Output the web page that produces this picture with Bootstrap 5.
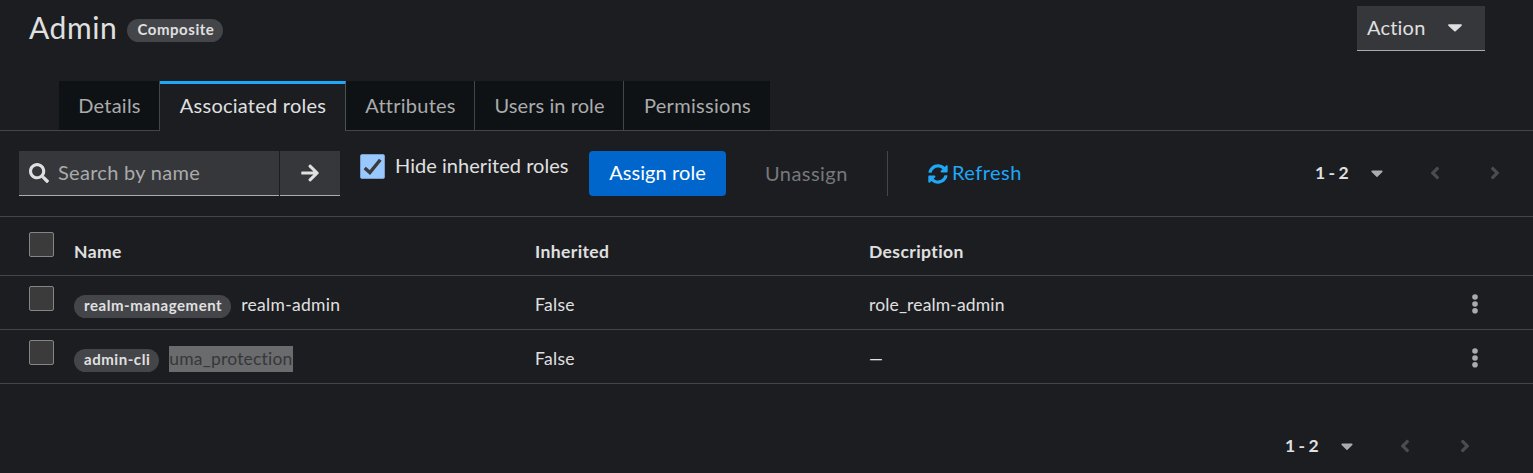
<!DOCTYPE html>
<html lang="en" data-bs-theme="dark">
<head>
<meta charset="utf-8">
<title>Admin role</title>
<link rel="stylesheet" href="https://cdn.jsdelivr.net/npm/bootstrap@5.3.0/dist/css/bootstrap.min.css">
<style>
:root{--line:#444548;--panel:#36373a;--fg:#e0e0e0;--muted:#aaabac;--blue:#1fa7f8}
body{background:#1b1d21;color:var(--fg);font:400 20px/30px Lato,"Red Hat Text",sans-serif;letter-spacing:.24px;overflow:hidden}
svg{fill:currentColor;flex:none;display:block}
.page-head{height:81px;padding:6px 48px 0 29px}
.page-title{font-size:30px;line-height:42px;letter-spacing:.6px;font-weight:400;color:var(--fg)}
.pill{display:inline-block;background:var(--line);border-radius:12px;height:23px;padding:0 9px 0 10px;font-size:15px;line-height:20px;font-weight:700;letter-spacing:.55px;white-space:nowrap}
.field{background:var(--panel);border:0;border-bottom:1px solid var(--muted);border-radius:0;height:45px;color:var(--fg)}
.action-btn{width:128px;padding:0 23px 2px 10px;letter-spacing:.2px}
.role-tabs{padding-left:59px;border-bottom:1px solid var(--line);height:50px;--bs-nav-tabs-border-width:0}
.role-tabs .nav-link{background:#0f1214;color:var(--muted);border:0;border-radius:0;border-right:1px solid var(--line);height:49px;padding:0 0 0 1px;text-align:center;line-height:48px;margin:0}
.role-tabs .nav-link.active{background:#1b1d21;color:var(--fg);height:50px;border-top:3px solid var(--blue);line-height:42px}
.role-tabs .last{border-right:0}
.toolbar{height:86px;border-bottom:1px solid var(--line);padding:20px 0 0 19px}
.search-box{width:260px;padding:0 10px}
.search-box input{background:none;border:0;outline:0;padding:0 0 2px;width:200px;color:var(--fg);letter-spacing:.29px}
.search-box input::placeholder{color:var(--muted);opacity:1}
.go-btn{width:60px;margin-left:1px}
.tick{width:25px;height:25px;margin:0;border:1px solid #858585;border-radius:2px!important;background-color:#3b3b3b;float:none;display:block}
.tick:checked{background-color:#99c8ff;border-color:#7b9fc9;background-size:100%;background-image:url("data:image/svg+xml,%3Csvg xmlns='http://www.w3.org/2000/svg' viewBox='0 0 23 23'%3E%3Cpath d='M3.7 13 8.9 17.6 19.3 4.7' fill='none' stroke='%233b3b3b' stroke-width='3.4'/%3E%3C/svg%3E")}
.assign{background:#06c;color:#fff;width:137px;height:45px;border:0;border-radius:4px;padding:0 0 3px;letter-spacing:.08px;font-size:20px}
.unassign{color:#77787b;letter-spacing:.45px;padding:0 0 2px 1px}
.divider{width:1px;height:45px;background:var(--line)}
.refresh{color:var(--blue);letter-spacing:.45px}
.pager{font-size:17.5px;font-weight:700;letter-spacing:-.4px;height:43px}
.pager svg{color:var(--muted)}
.pager .arrow{color:#4b4c50}
.role-table{width:100%;font-size:17.5px;line-height:26px;letter-spacing:.3px;table-layout:fixed;border-collapse:separate;border-spacing:0}
.role-table th,.role-table td{padding:0;border-bottom:1px solid var(--line);vertical-align:top}
.role-table th{height:59px;padding-top:22px;font-weight:700;letter-spacing:.4px}
.role-table td{height:54px;padding-top:16px}
.role-table th.pick{padding:15px 0 0 29px}
.role-table td.pick{padding:10px 0 0 29px}
.role-table svg{color:var(--muted)}
.picked{background:#6a6b6d;color:#36373a;height:26px;letter-spacing:.2px}
</style>
</head>
<body>
<header class="page-head d-flex justify-content-between">
  <div class="d-flex">
    <h1 class="page-title mb-0">Admin</h1>
    <span class="pill" style="margin:13px 0 0 10px">Composite</span>
  </div>
  <button class="field action-btn d-flex align-items-center justify-content-between" type="button">Action
    <svg width="14" height="22" viewBox="10 0 300 512" preserveAspectRatio="none"><path d="M31.3 192h257.3c17.8 0 26.7 21.5 14.1 34.1L174.1 354.8c-7.8 7.8-20.5 7.8-28.3 0L17.2 226.1C4.6 213.5 13.5 192 31.3 192z"/></svg>
  </button>
</header>

<ul class="nav nav-tabs role-tabs flex-nowrap">
  <li class="nav-item"><a class="nav-link" style="width:101px">Details</a></li>
  <li class="nav-item"><a class="nav-link active" style="width:186px">Associated roles</a></li>
  <li class="nav-item"><a class="nav-link" style="width:129px">Attributes</a></li>
  <li class="nav-item"><a class="nav-link" style="width:149px;letter-spacing:.08px">Users in role</a></li>
  <li class="nav-item"><a class="nav-link last" style="width:146px;letter-spacing:.3px">Permissions</a></li>
</ul>

<section class="toolbar d-flex align-items-start">
  <div class="field search-box d-flex align-items-center">
    <svg width="20" height="20" viewBox="0 0 512 512"><path d="M505 442.7L405.3 343c-4.5-4.5-10.6-7-17-7H372c27.6-35.3 44-79.7 44-128C416 93.1 322.9 0 208 0S0 93.1 0 208s93.1 208 208 208c48.3 0 92.7-16.4 128-44v16.3c0 6.4 2.5 12.5 7 17l99.7 99.7c9.4 9.4 24.6 9.4 33.9 0l28.3-28.3c9.4-9.4 9.4-24.6.1-34zM208 336c-70.7 0-128-57.2-128-128 0-70.7 57.2-128 128-128 70.7 0 128 57.2 128 128 0 70.7-57.2 128-128 128z"/></svg>
    <input type="text" placeholder="Search by name" style="margin-left:9px">
  </div>
  <button class="field go-btn d-flex align-items-center justify-content-center p-0" type="button">
    <svg width="18" height="20" viewBox="0 0 448 512"><path d="M190.5 66.9l22.2-22.2c9.4-9.4 24.6-9.4 33.9 0L441 239c9.4 9.4 9.4 24.6 0 33.9L246.6 467.3c-9.4 9.4-24.6 9.4-33.9 0l-22.2-22.2c-9.5-9.5-9.3-25 .4-34.3L311.4 296H24c-13.3 0-24-10.7-24-24v-32c0-13.3 10.7-24 24-24h287.4L190.9 101.2c-9.8-9.3-10-24.8-.4-34.3z"/></svg>
  </button>
  <label class="d-flex" style="margin-left:20px;width:229px;letter-spacing:.04px"><input class="form-check-input tick" style="margin-top:3px" type="checkbox" checked><span style="margin:-1px 0 0 10px">Hide inherited roles</span></label>
  <button class="btn assign" type="button">Assign role</button>
  <div class="d-flex align-items-center" style="height:45px;margin-left:38px">
    <span class="unassign" style="width:123px">Unassign</span>
    <span class="divider"></span>
    <span class="refresh d-flex align-items-center" style="margin-left:40px"><svg width="20" height="20" viewBox="0 0 512 512"><path d="M370.72 133.28C339.458 104.008 298.888 87.962 255.848 88c-77.458.068-144.328 53.178-162.791 126.85-1.344 5.363-6.122 9.15-11.651 9.15H24.103c-7.498 0-13.194-6.807-11.807-14.176C33.933 94.924 134.813 8 256 8c66.448 0 126.791 26.136 171.315 68.685L463.03 40.97C478.149 25.851 504 36.559 504 57.941V192c0 13.255-10.745 24-24 24H345.941c-21.382 0-32.09-25.851-16.971-40.971l41.75-41.749zM32 296h134.059c21.382 0 32.09 25.851 16.971 40.971l-41.75 41.75c31.262 29.273 71.835 45.319 114.876 45.28 77.418-.07 144.315-53.144 162.787-126.849 1.344-5.363 6.122-9.15 11.651-9.15h57.304c7.498 0 13.194 6.807 11.807 14.176C478.067 417.076 377.187 504 256 504c-66.448 0-126.791-26.136-171.315-68.685L48.97 471.03C33.851 486.149 8 475.441 8 454.059V320c0-13.255 10.745-24 24-24z"/></svg><span style="margin:0 0 3px 4px">Refresh</span></span>
  </div>
  <div class="pager d-flex align-items-center ms-auto" style="margin-right:33px">
    <span style="width:56px">1 - 2</span>
    <svg width="12" height="20" viewBox="0 0 320 512"><path d="M31.3 192h257.3c17.8 0 26.7 21.5 14.1 34.1L174.1 354.8c-7.8 7.8-20.5 7.8-28.3 0L17.2 226.1C4.6 213.5 13.5 192 31.3 192z"/></svg>
    <svg class="arrow" style="margin-left:47px" width="10" height="20" viewBox="0 0 256 512"><path d="M31.7 239l136-136c9.4-9.4 24.6-9.4 33.9 0l22.6 22.6c9.4 9.4 9.4 24.6 0 33.9L127.9 256l96.4 96.4c9.4 9.4 9.4 24.6 0 33.9L201.7 409c-9.4 9.4-24.6 9.4-33.9 0l-136-136c-9.5-9.4-9.5-24.6-.1-34z"/></svg>
    <svg class="arrow" style="margin-left:50px" width="10" height="20" viewBox="0 0 256 512"><path d="M224.3 273l-136 136c-9.4 9.4-24.6 9.4-33.9 0l-22.6-22.6c-9.4-9.4-9.4-24.6 0-33.9l96.4-96.4-96.4-96.4c-9.4-9.4-9.4-24.6 0-33.9L54.3 103c9.4-9.4 24.6-9.4 33.9 0l136 136c9.5 9.4 9.5 24.6.1 34z"/></svg>
  </div>
</section>

<table class="role-table">
  <colgroup><col style="width:74px"><col style="width:461px"><col style="width:334px"><col><col style="width:63px"></colgroup>
  <thead>
    <tr><th class="pick"><input class="form-check-input tick" type="checkbox"></th><th>Name</th><th>Inherited</th><th>Description</th><th></th></tr>
  </thead>
  <tbody>
    <tr>
      <td class="pick"><input class="form-check-input tick" type="checkbox"></td>
      <td><div class="d-flex"><span class="pill" style="margin-top:3px">realm-management</span><span style="margin-left:10px">realm-admin</span></div></td>
      <td>False</td><td style="letter-spacing:.15px">role_realm-admin</td>
      <td><svg width="10" height="24" viewBox="0 0 10 24"><circle cx="5" cy="5" r="2.8"/><circle cx="5" cy="12" r="2.8"/><circle cx="5" cy="18.8" r="2.8"/></svg></td>
    </tr>
    <tr>
      <td class="pick"><input class="form-check-input tick" type="checkbox"></td>
      <td><div class="d-flex"><span class="pill" style="margin-top:3px">admin-cli</span><span class="picked" style="margin-left:10px">uma_protection</span></div></td>
      <td>False</td><td>—</td>
      <td><svg width="10" height="24" viewBox="0 0 10 24"><circle cx="5" cy="5" r="2.8"/><circle cx="5" cy="12" r="2.8"/><circle cx="5" cy="18.8" r="2.8"/></svg></td>
    </tr>
  </tbody>
</table>

<footer class="pager d-flex align-items-center justify-content-end" style="margin:40px 63px 0 0">
  <span style="width:56px">1 - 2</span>
  <svg width="12" height="20" viewBox="0 0 320 512"><path d="M31.3 192h257.3c17.8 0 26.7 21.5 14.1 34.1L174.1 354.8c-7.8 7.8-20.5 7.8-28.3 0L17.2 226.1C4.6 213.5 13.5 192 31.3 192z"/></svg>
  <svg class="arrow" style="margin-left:47px" width="10" height="20" viewBox="0 0 256 512"><path d="M31.7 239l136-136c9.4-9.4 24.6-9.4 33.9 0l22.6 22.6c9.4 9.4 9.4 24.6 0 33.9L127.9 256l96.4 96.4c9.4 9.4 9.4 24.6 0 33.9L201.7 409c-9.4 9.4-24.6 9.4-33.9 0l-136-136c-9.5-9.4-9.5-24.6-.1-34z"/></svg>
  <svg class="arrow" style="margin-left:50px" width="10" height="20" viewBox="0 0 256 512"><path d="M224.3 273l-136 136c-9.4 9.4-24.6 9.4-33.9 0l-22.6-22.6c-9.4-9.4-9.4-24.6 0-33.9l96.4-96.4-96.4-96.4c-9.4-9.4-9.4-24.6 0-33.9L54.3 103c9.4-9.4 24.6-9.4 33.9 0l136 136c9.5 9.4 9.5 24.6.1 34z"/></svg>
</footer>
<script src="https://cdn.jsdelivr.net/npm/bootstrap@5.3.0/dist/js/bootstrap.bundle.min.js"></script>
</body>
</html>
